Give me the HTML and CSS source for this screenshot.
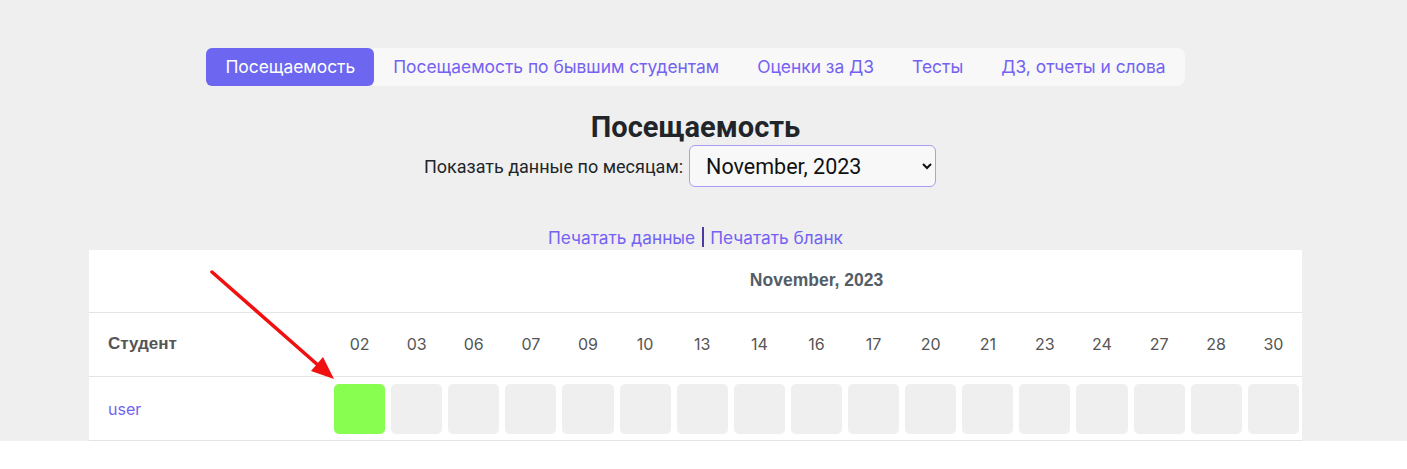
FILE: index.html
```html
<!DOCTYPE html>
<html lang="ru">
    <head>
        <meta charset="UTF-8">
        <meta name="viewport" content="width=device-width, initial-scale=1.0">
        <title>Посещаемость</title>
        <link rel="stylesheet" href="styles.css">
    </head>
    <body>
        <div class="page">
            <nav class="tabs">
                <a class="tab active" href="#">Посещаемость</a>
                <a class="tab" href="#">Посещаемость по бывшим студентам</a>
                <a class="tab" href="#">Оценки за ДЗ</a>
                <a class="tab" href="#">Тесты</a>
                <a class="tab" href="#">ДЗ, отчеты и слова</a>
            </nav>

            <h1 class="title">Посещаемость</h1>
            <div class="month-filter">
                <label for="month">Показать данные по месяцам:</label>
                <select id="month" class="month-select">
                    <option>November, 2023</option>
                    <option>October, 2023</option>
                </select>
            </div>

            <div class="print-links">
                <a href="#">Печатать данные</a><span class="sep"></span><a href="#">Печатать бланк</a>
            </div>

            <table class="journal">
                <colgroup>
                    <col class="col-student">
                </colgroup>
                <tr class="row-month">
                    <th></th>
                    <th colspan="17" class="month-name">November, 2023</th>
                </tr>
                <tr class="row-days">
                    <th class="student-head">Студент</th>
                    <td>02</td><td>03</td><td>06</td><td>07</td><td>09</td><td>10</td>
                    <td>13</td><td>14</td><td>16</td><td>17</td><td>20</td><td>21</td>
                    <td>23</td><td>24</td><td>27</td><td>28</td><td>30</td>
                </tr>
                <tr class="row-marks">
                    <td class="student-name"><a href="#">user</a></td>
                    <td><div class="mark present"></div></td>
                    <td><div class="mark"></div></td>
                    <td><div class="mark"></div></td>
                    <td><div class="mark"></div></td>
                    <td><div class="mark"></div></td>
                    <td><div class="mark"></div></td>
                    <td><div class="mark"></div></td>
                    <td><div class="mark"></div></td>
                    <td><div class="mark"></div></td>
                    <td><div class="mark"></div></td>
                    <td><div class="mark"></div></td>
                    <td><div class="mark"></div></td>
                    <td><div class="mark"></div></td>
                    <td><div class="mark"></div></td>
                    <td><div class="mark"></div></td>
                    <td><div class="mark"></div></td>
                    <td><div class="mark"></div></td>
                </tr>
            </table>

            <!-- annotation arrow -->
            <svg class="arrow" width="140" height="130" viewBox="200 260 140 130">
                <line x1="212" y1="272" x2="319" y2="366" stroke="#f01010" stroke-width="3.5" stroke-linecap="round"/>
                <polygon points="334,379 311,371 323,357" fill="#f01010"/>
            </svg>
        </div>
    </body>
</html>
```

FILE: styles.css
```css
body {
    margin: 0;
    background: #ffffff;
    font-family: Inter, 'Noto Sans', sans-serif;
}
a {
    text-decoration: none;
}
.page {
    position: relative;
    padding: 48px 16px 0 0;
    background: #efefef;
}
.tabs {
    display: flex;
    width: fit-content;
    margin: 0 auto;
    background: #f8f8f8;
    border-radius: 8px;
}
.tab {
    padding: 8px 19px;
    font-size: 17.4px;
    line-height: 22px;
    color: #7462f2;
    border-radius: 6px;
}
.tab.active {
    background: #6c66f0;
    color: #ffffff;
}
.title {
    margin: 25px 0 0;
    text-align: center;
    font-family: Roboto, 'Liberation Sans', sans-serif;
    font-size: 29px;
    line-height: 32px;
    color: #212529;
}
.month-filter {
    display: flex;
    justify-content: center;
    align-items: center;
    gap: 6px;
    margin-top: 2px;
    padding-right: 31px;
    font-family: Roboto, 'Liberation Sans', sans-serif;
    font-size: 18px;
    color: #212529;
}
.month-select {
    width: 247px;
    height: 42px;
    padding: 0 10px 0 12px;
    font-family: Roboto, 'Liberation Sans', sans-serif;
    font-size: 21.5px;
    color: #111;
    background: #f8f8f8;
    border: 1px solid #a79ff6;
    border-radius: 6px;
}
.print-links {
    display: flex;
    justify-content: center;
    align-items: center;
    margin-top: 37px;
    height: 26px;
    font-size: 17.3px;
}
.print-links a {
    color: #7462f2;
}
.sep {
    width: 2px;
    height: 20px;
    margin: 0 6px 0 7px;
    background: #4b3b9a;
}
.journal {
    width: 1213px;
    margin: 0 auto;
    border-collapse: collapse;
    table-layout: fixed;
    background: #ffffff;
}
.col-student {
    width: 242px;
}
.journal th,
.journal td {
    padding: 0;
    border-bottom: 1px solid #e4e4e4;
}
.row-month {
    height: 62px;
}
.month-name {
    font-family: 'Liberation Sans', Arial, sans-serif;
    font-size: 17.5px;
    color: #555d66;
    text-align: center;
}
.row-days {
    height: 64px;
}
.row-days td {
    text-align: center;
    font-size: 16px;
    color: #555;
}
.student-head {
    text-align: left;
    padding-left: 19px !important;
    font-family: 'Liberation Sans', Arial, sans-serif;
    font-size: 17px;
    color: #555;
}
.row-marks td {
    padding: 7px 3px 6px;
}
.row-marks .student-name {
    padding-left: 19px;
    font-size: 16px;
}
.student-name a {
    color: #7462f2;
}
.mark {
    height: 50px;
    background: #efefef;
    border-radius: 5px;
}
.mark.present {
    background: #88fe50;
}
.arrow {
    position: absolute;
    left: 200px;
    top: 260px;
}
```
